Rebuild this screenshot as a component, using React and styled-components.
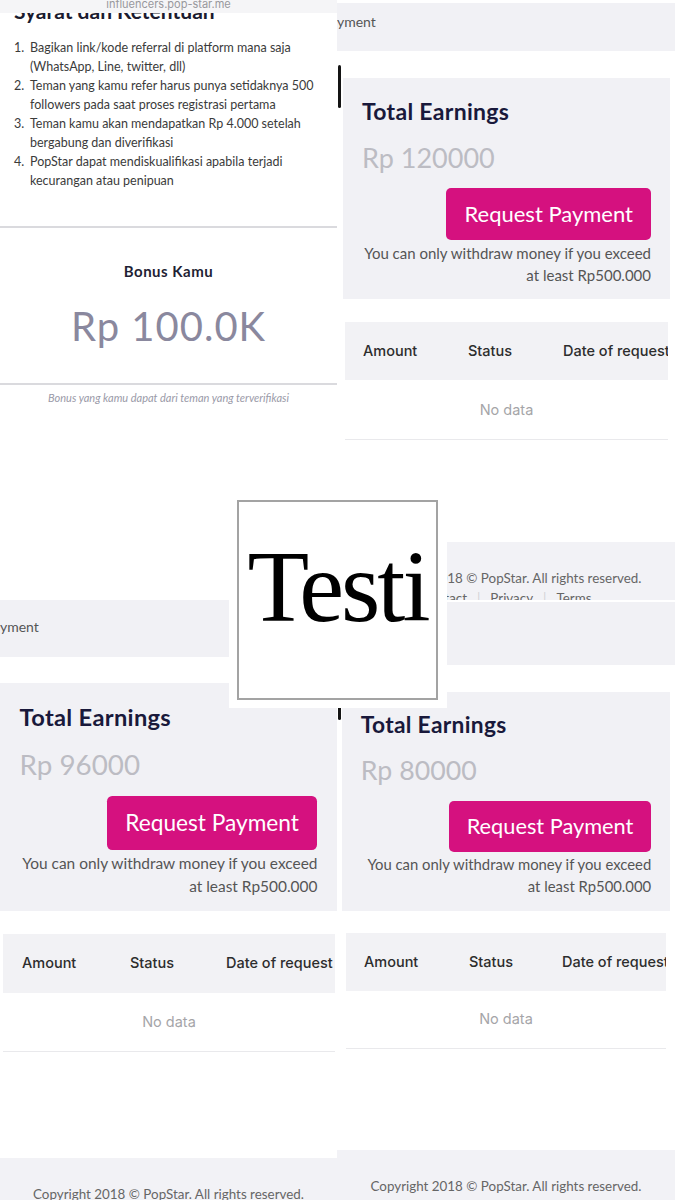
import React from "react";
import styled, { createGlobalStyle } from "styled-components";

const Global = createGlobalStyle`
  html, body { margin: 0; padding: 0; background: #fff; }
  body { font-family: Lato, "Noto Sans", sans-serif; }
  * { box-sizing: border-box; }
`;

const Page = styled.div`
  position: relative;
  width: 675px;
  height: 1200px;
  overflow: hidden;
  background: #fff;
`;

const Collage = styled.div`
  display: grid;
  grid-template-columns: 337px 338px;
  grid-template-rows: 600px 600px;
`;

const Shot = styled.section`
  position: relative;
  overflow: hidden;
  background: #fff;
  display: flex;
  flex-direction: column;
  font-family: Lato, "Noto Sans", sans-serif;
`;

/* ---------- referral screenshot ---------- */
const UrlBar = styled.div`
  position: absolute;
  top: 0;
  left: 0;
  right: 0;
  height: 13px;
  background: #f5f5f7;
  overflow: hidden;
  text-align: center;
  font: 400 11px/11px Inter, sans-serif;
  color: #98989d;
`;

const UrlText = styled.span`
  display: block;
  margin-top: -1px;
`;

const RulesTitle = styled.h2`
  margin: 0;
  padding-left: 14px;
  font: 700 21px/22px Lato, sans-serif;
  color: #1b1b2f;
  white-space: nowrap;
`;

const Rules = styled.ol`
  list-style: none;
  margin: 16px 0 0;
  padding: 0 0 0 14px;
  font: 400 12.5px/19px Lato, sans-serif;
  color: #3b3b3b;
`;

const Rule = styled.li`
  display: flex;
`;

const RuleNum = styled.span`
  width: 16px;
  flex: none;
`;

const RuleText = styled.span`
  white-space: nowrap;
`;

const Divider = styled.hr`
  margin: ${(p) => p.$mt}px 0 0;
  border: none;
  height: 2px;
  background: #dadade;
`;

const BonusLabel = styled.div`
  margin-top: 33px;
  text-align: center;
  font: 700 15px/20px Lato, sans-serif;
  letter-spacing: 0.5px;
  color: #1f1f35;
`;

const BonusValue = styled.div`
  margin-top: 21px;
  text-align: center;
  font: 400 40px/48px Lato, sans-serif;
  letter-spacing: 1px;
  color: #8a889e;
`;

const BonusCaption = styled.div`
  margin-top: 6px;
  text-align: center;
  font: italic 400 11px/14px Lato, sans-serif;
  color: #9a9aa8;
`;

/* ---------- earnings screenshots ---------- */
const TopBar = styled.div`
  flex: none;
  margin-top: ${(p) => p.$mt}px;
  margin-bottom: ${(p) => p.$mb}px;
  height: ${(p) => p.$h}px;
  padding-top: ${(p) => p.$pt}px;
  background: #f1f1f5;
  font: 400 14px/20px Lato, sans-serif;
  color: #555;
  white-space: nowrap;
  overflow: hidden;
`;

const ScrollMark = styled.span`
  position: absolute;
  left: 1px;
  top: ${(p) => p.$top}px;
  width: 3px;
  height: ${(p) => p.$h}px;
  background: #141414;
  border-radius: 2px;
`;

const CardWrap = styled.div`
  flex: none;
  margin: 0 ${(p) => p.$mr}px 0 ${(p) => p.$ml}px;
`;

const Card = styled.div`
  zoom: ${(p) => p.$zoom};
  background: #f1f1f5;
  padding: 20px 19px 13px;
`;

const CardTitle = styled.div`
  font: 700 23px/26px Lato, sans-serif;
  letter-spacing: 0.3px;
  color: #19193b;
`;

const CardAmount = styled.div`
  margin-top: 18px;
  font: 400 27px/32px Lato, sans-serif;
  color: #bcbcc3;
`;

const ButtonRow = styled.div`
  margin-top: 14px;
  display: flex;
  justify-content: flex-end;
`;

const PayButton = styled.button`
  height: 52px;
  padding: 0 18px;
  border: none;
  border-radius: 5px;
  background: #d5117f;
  color: #fff;
  font: 400 22px/52px Lato, sans-serif;
  cursor: pointer;
`;

const CardNote = styled.p`
  margin: 2px 0 0;
  text-align: right;
  font: 400 15px/22px Lato, sans-serif;
  color: #555;
`;

const Table = styled.div`
  flex: none;
  margin: ${(p) => p.$mt}px ${(p) => p.$mr}px 0 ${(p) => p.$ml}px;
  font-family: Inter, sans-serif;
`;

const HeadRow = styled.div`
  display: grid;
  grid-template-columns: ${(p) => p.$cols};
  align-items: center;
  height: ${(p) => p.$h}px;
  padding-left: ${(p) => p.$pad}px;
  background: #f2f2f5;
  overflow: hidden;
  white-space: nowrap;
  font: 500 14.5px/20px Inter, sans-serif;
  color: #2d2d2d;
`;

const HeadCell = styled.span`
  min-width: 0;
  overflow: hidden;
`;

const EmptyRow = styled.div`
  height: ${(p) => p.$h}px;
  display: flex;
  align-items: center;
  justify-content: center;
  border-bottom: 1px solid #e9e9ec;
  font: 400 14.5px/20px Inter, sans-serif;
  color: #a5a5a8;
`;

const Footer = styled.footer`
  flex: 1;
  margin-top: ${(p) => p.$mt}px;
  padding-top: 26px;
  background: #f2f2f6;
  text-align: center;
  font: 400 13.4px/20px Lato, sans-serif;
  color: #666;
  white-space: nowrap;
`;

const FooterLinks = styled.div`
  display: flex;
  justify-content: center;
  gap: 10px;
`;

const Sep = styled.span`
  color: #d2d2d6;
`;

/* ---------- overlay ---------- */
const TestiFrame = styled.div`
  position: absolute;
  left: 229px;
  top: 492px;
  padding: 8px 9px 8px 8px;
  background: #fff;
`;

const TestiBox = styled.div`
  width: 201px;
  height: 200px;
  border: 2px solid #a3a3a3;
  display: flex;
  align-items: center;
  justify-content: center;
  padding-bottom: 25px;
  font: 400 101px/1 "Liberation Serif", "Times New Roman", serif;
  letter-spacing: -3px;
  color: #000;
`;

const rules = [
  ["Bagikan link/kode referral di platform mana saja", "(WhatsApp, Line, twitter, dll)"],
  ["Teman yang kamu refer harus punya setidaknya 500", "followers pada saat proses registrasi pertama"],
  ["Teman kamu akan mendapatkan Rp 4.000 setelah", "bergabung dan diverifikasi"],
  ["PopStar dapat mendiskualifikasi apabila terjadi", "kecurangan atau penipuan"],
];

function ReferralShot() {
  return (
    <Shot>
      <RulesTitle>Syarat dan Ketentuan</RulesTitle>
      <UrlBar>
        <UrlText>influencers.pop-star.me</UrlText>
      </UrlBar>
      <Rules>
        {rules.map((r, i) => (
          <Rule key={i}>
            <RuleNum>{i + 1}.</RuleNum>
            <RuleText>
              {r[0]}
              <br />
              {r[1]}
            </RuleText>
          </Rule>
        ))}
      </Rules>
      <Divider $mt={36} />
      <BonusLabel>Bonus Kamu</BonusLabel>
      <BonusValue>Rp 100.0K</BonusValue>
      <Divider $mt={33} />
      <BonusCaption>Bonus yang kamu dapat dari teman yang terverifikasi</BonusCaption>
    </Shot>
  );
}

function EarningsShot({ c, amount }) {
  return (
    <Shot>
      <TopBar $mt={c.barMt} $h={c.barH} $pt={c.barPt} $mb={c.cardGap}>
        yment
      </TopBar>
      {c.mark && <ScrollMark $top={c.mark[0]} $h={c.mark[1]} />}
      <CardWrap $ml={c.cardMl} $mr={c.cardMr}>
        <Card $zoom={c.zoom}>
          <CardTitle>Total Earnings</CardTitle>
          <CardAmount>Rp {amount}</CardAmount>
          <ButtonRow>
            <PayButton>Request Payment</PayButton>
          </ButtonRow>
          <CardNote>
            You can only withdraw money if you exceed
            <br />
            at least Rp500.000
          </CardNote>
        </Card>
      </CardWrap>
      <Table $mt={c.tableGap} $ml={c.tableMl} $mr={c.tableMr}>
        <HeadRow $cols={c.cols} $h={c.headH} $pad={c.pad}>
          <HeadCell>Amount</HeadCell>
          <HeadCell>Status</HeadCell>
          <HeadCell>Date of request</HeadCell>
        </HeadRow>
        <EmptyRow $h={c.rowH}>No data</EmptyRow>
      </Table>
      <Footer $mt={c.footGap}>
        <div>Copyright 2018 © PopStar. All rights reserved.</div>
        <FooterLinks>
          <span>Contact</span>
          <Sep>|</Sep>
          <span>Privacy</span>
          <Sep>|</Sep>
          <span>Terms</span>
        </FooterLinks>
      </Footer>
    </Shot>
  );
}

const topRight = {
  barMt: 3, barH: 48, barPt: 9, cardGap: 27, mark: [65, 43],
  cardMl: 6, cardMr: 5, zoom: 1,
  tableGap: 23, tableMl: 8, tableMr: 7, cols: "105px 95px 1fr", pad: 18, headH: 58, rowH: 60,
  footGap: 102,
};

const bottomLeft = {
  barMt: 0, barH: 57, barPt: 17, cardGap: 26, mark: null,
  cardMl: 0, cardMr: 0, zoom: 1.03,
  tableGap: 23, tableMl: 3, tableMr: 2, cols: "108px 96px 1fr", pad: 19, headH: 59, rowH: 59,
  footGap: 106,
};

const bottomRight = {
  barMt: 2, barH: 63, barPt: 19, cardGap: 27, mark: [79, 41],
  cardMl: 5, cardMr: 5, zoom: 0.99,
  tableGap: 22, tableMl: 9, tableMr: 9, cols: "105px 93px 1fr", pad: 18, headH: 58, rowH: 58,
  footGap: 101,
};

export default function App() {
  return (
    <Page>
      <Global />
      <Collage>
        <ReferralShot />
        <EarningsShot c={topRight} amount="120000" />
        <EarningsShot c={bottomLeft} amount="96000" />
        <EarningsShot c={bottomRight} amount="80000" />
      </Collage>
      <TestiFrame>
        <TestiBox>Testi</TestiBox>
      </TestiFrame>
    </Page>
  );
}
